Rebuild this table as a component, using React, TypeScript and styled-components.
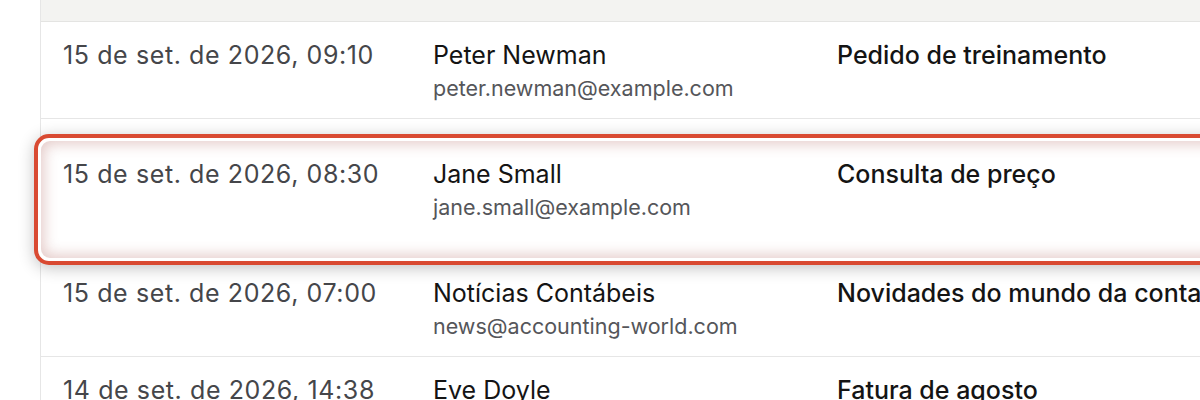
import React from "react";
import styled, { createGlobalStyle } from "styled-components";

const Global = createGlobalStyle`
  html, body { margin: 0; padding: 0; background: #ffffff; overflow: hidden; }
  body { font-family: Inter, "Noto Sans", "Liberation Sans", sans-serif; }
`;

const Page = styled.div`
  width: 1200px;
  height: 400px;
  overflow: hidden;
  padding-left: 40px;
  box-sizing: border-box;
`;

const Table = styled.div`
  margin-top: -28px;
  border-left: 1px solid #e6e6e6;
  width: 1300px;
`;

const Header = styled.div`
  display: grid;
  grid-template-columns: 370px 404px 1fr;
  height: 50px;
  box-sizing: border-box;
  background: #f3f3f1;
  border-bottom: 1px solid #e4e4e2;
  align-items: end;
`;

const HeadCell = styled.div`
  padding: 0 22px 21px;
  font-size: 15px;
  font-weight: 600;
  letter-spacing: 0.06em;
  text-transform: uppercase;
  color: #b4b4b2;
`;

const Row = styled.div`
  display: grid;
  grid-template-columns: 370px 404px 1fr;
  height: 97px;
  box-sizing: border-box;
  padding-top: 17px;
  border-bottom: 1px solid #e6e6e6;
`;

const Highlight = styled.div`
  margin: 15px 0 -5px -7px;
  position: relative;
  border: 4px solid #d94a32;
  border-radius: 15px;
  padding: 3px;
  background: #ffffff;
  box-shadow: 0 3px 16px rgba(0, 0, 0, 0.24);
  width: 1400px;
`;

const HighlightRow = styled(Row)`
  height: 117px;
  border-bottom: none;
  border-radius: 9px;
  background: #ffffff;
  box-shadow: inset 0 0 14px 3px rgba(170, 90, 85, 0.32);
`;

const Cell = styled.div`
  padding: 0 22px;
  white-space: nowrap;
`;

const DateText = styled.div`
  font-size: 25px;
  line-height: 32px;
  letter-spacing: 0.6px;
  color: #45464a;
`;

const Name = styled.div`
  font-size: 25px;
  line-height: 32px;
  color: #141414;
`;

const Email = styled.div`
  margin-top: 3px;
  font-size: 21.5px;
  line-height: 28px;
  color: #55565a;
`;

const Subject = styled.div`
  font-size: 25px;
  line-height: 32px;
  font-weight: 500;
  color: #141414;
`;

type Msg = { date: string; name: string; email: string; subject: string };

const messages: Msg[] = [
  { date: "15 de set. de 2026, 09:10", name: "Peter Newman", email: "peter.newman@example.com", subject: "Pedido de treinamento" },
  { date: "15 de set. de 2026, 08:30", name: "Jane Small", email: "jane.small@example.com", subject: "Consulta de preço" },
  { date: "15 de set. de 2026, 07:00", name: "Notícias Contábeis", email: "news@accounting-world.com", subject: "Novidades do mundo da contabilidade" },
  { date: "14 de set. de 2026, 14:38", name: "Eve Doyle", email: "eve.doyle@example.com", subject: "Fatura de agosto" },
];

const Cells = ({ m }: { m: Msg }) => (
  <>
    <Cell>
      <DateText>{m.date}</DateText>
    </Cell>
    <Cell>
      <Name>{m.name}</Name>
      <Email>{m.email}</Email>
    </Cell>
    <Cell>
      <Subject>{m.subject}</Subject>
    </Cell>
  </>
);

export default function App() {
  return (
    <Page>
      <Global />
      <Table>
        <Header>
          <HeadCell>Data e hora</HeadCell>
          <HeadCell>Remetente</HeadCell>
          <HeadCell>Assunto</HeadCell>
        </Header>
        {messages.map((m, i) =>
          i === 1 ? (
            <Highlight key={i}>
              <HighlightRow>
                <Cells m={m} />
              </HighlightRow>
            </Highlight>
          ) : (
            <Row key={i}>
              <Cells m={m} />
            </Row>
          )
        )}
      </Table>
    </Page>
  );
}
